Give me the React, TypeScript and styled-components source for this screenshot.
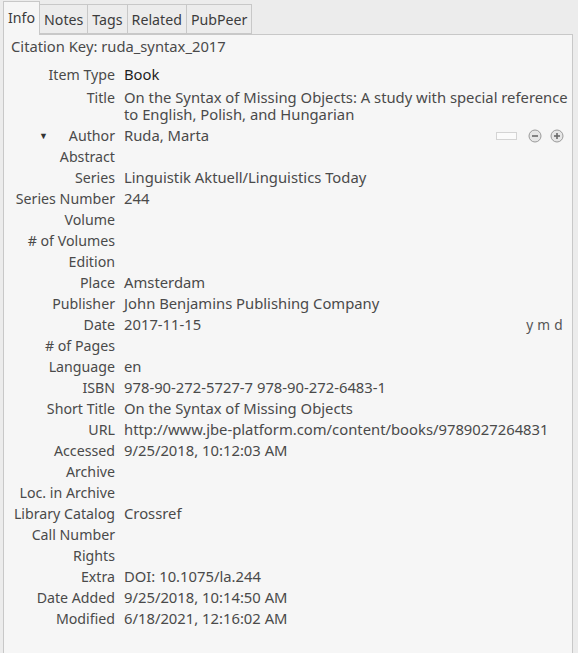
import React from "react";
import styled, { createGlobalStyle } from "styled-components";

const Global = createGlobalStyle`
  html, body { margin: 0; padding: 0; background: #ececec; }
  body { font-family: "Noto Sans", "Open Sans", sans-serif; font-size: 14.2px; color: #4a4a4a; }
`;

const Page = styled.div`
  display: flex;
  flex-direction: column;
  height: 653px;
  padding: 1px 0 0 3px;
  box-sizing: border-box;
`;

const TabStrip = styled.div`
  display: flex;
  align-items: flex-end;
  height: 33px;
  position: relative;
  z-index: 1;
`;

const Tab = styled.div<{ $active?: boolean }>`
  box-sizing: border-box;
  height: ${(p) => (p.$active ? "34px" : "30px")};
  margin-bottom: ${(p) => (p.$active ? "-1px" : "0")};
  padding: 0 4px;
  border: 1px solid #c8c8c8;
  border-left: ${(p) => (p.$active ? "1px solid #c8c8c8" : "none")};
  border-bottom: ${(p) => (p.$active ? "none" : "1px solid #c8c8c8")};
  background: ${(p) => (p.$active ? "#f6f6f6" : "#ececec")};
  display: flex;
  align-items: center;
  padding-bottom: ${(p) => (p.$active ? "3px" : "0")};
  color: #3c3c3c;
  white-space: nowrap;
`;

const Panel = styled.div`
  flex: 1;
  width: 570px;
  box-sizing: border-box;
  border: 1px solid #c8c8c8;
  border-bottom: none;
  background: #f6f6f6;
  padding: 1px 0 0 0;
`;

const CitationKey = styled.div`
  height: 20px;
  line-height: 20px;
  padding-left: 7px;
  font-size: 14.75px;
`;

const Fields = styled.div`
  display: flex;
  flex-direction: column;
  margin-top: 6px;
`;

const Row = styled.div<{ $tall?: boolean }>`
  display: grid;
  grid-template-columns: 111px 1fr;
  column-gap: 9px;
  padding: ${(p) => (p.$tall ? "4px 0" : "2px 0")};
  line-height: 17px;
`;

const Label = styled.div`
  display: flex;
  justify-content: flex-end;
  align-items: flex-start;
  text-align: right;
  white-space: nowrap;
  color: #4a4a4a;
`;

const Twisty = styled.span`
  font-size: 9px;
  color: #333;
  margin-right: auto;
  margin-left: 35px;
`;

const Value = styled.div<{ $strong?: boolean }>`
  padding-right: 3px;
  font-size: 14.8px;
  color: ${(p) => (p.$strong ? "#1e1e1e" : "#4a4a4a")};
  display: flex;
  align-items: flex-start;
  justify-content: space-between;
`;

const Controls = styled.div`
  display: flex;
  align-items: center;
  gap: 8px;
  height: 17px;
  margin-right: 5px;
`;

const MiniBox = styled.div`
  width: 19px;
  height: 6px;
  border: 1px solid #d4d4d4;
  background: #fbfbfb;
  margin-right: 3px;
`;

const DateOrder = styled.span`
  color: #555;
  font-size: 13.7px;
  letter-spacing: 0.3px;
  margin-right: 6px;
`;

const CircleIcon = ({ plus }: { plus?: boolean }) => (
  <svg width="14" height="14" viewBox="0 0 14 14">
    <circle cx="7" cy="7" r="6" fill="#e6e6e6" stroke="#9a9a9a" strokeWidth="1" />
    <rect x="4" y="6.2" width="6" height="1.6" fill="#6a6a6a" />
    {plus && <rect x="6.2" y="4" width="1.6" height="6" fill="#6a6a6a" />}
  </svg>
);

type F = { label: string; value?: string };

const afterAuthor: F[] = [
  { label: "Abstract" },
  { label: "Series", value: "Linguistik Aktuell/Linguistics Today" },
  { label: "Series Number", value: "244" },
  { label: "Volume" },
  { label: "# of Volumes" },
  { label: "Edition" },
  { label: "Place", value: "Amsterdam" },
  { label: "Publisher", value: "John Benjamins Publishing Company" },
];

const afterDate: F[] = [
  { label: "# of Pages" },
  { label: "Language", value: "en" },
  { label: "ISBN", value: "978-90-272-5727-7 978-90-272-6483-1" },
  { label: "Short Title", value: "On the Syntax of Missing Objects" },
  { label: "URL", value: "http://www.jbe-platform.com/content/books/9789027264831" },
  { label: "Accessed", value: "9/25/2018, 10:12:03 AM" },
  { label: "Archive" },
  { label: "Loc. in Archive" },
  { label: "Library Catalog", value: "Crossref" },
  { label: "Call Number" },
  { label: "Rights" },
  { label: "Extra", value: "DOI: 10.1075/la.244" },
  { label: "Date Added", value: "9/25/2018, 10:14:50 AM" },
  { label: "Modified", value: "6/18/2021, 12:16:02 AM" },
];

const Plain = ({ f }: { f: F }) => (
  <Row>
    <Label>{f.label}</Label>
    <Value>{f.value ?? ""}</Value>
  </Row>
);

export default function App() {
  return (
    <>
      <Global />
      <Page>
        <TabStrip>
          <Tab $active>Info</Tab>
          <Tab>Notes</Tab>
          <Tab>Tags</Tab>
          <Tab>Related</Tab>
          <Tab>PubPeer</Tab>
        </TabStrip>
        <Panel>
          <CitationKey>Citation Key: ruda_syntax_2017</CitationKey>
          <Fields>
            <Row $tall>
              <Label>Item Type</Label>
              <Value $strong>Book</Value>
            </Row>
            <Row>
              <Label>Title</Label>
              <Value>
                On the Syntax of Missing Objects: A study with special reference to English, Polish, and Hungarian
              </Value>
            </Row>
            <Row>
              <Label>
                <Twisty>▼</Twisty>
                Author
              </Label>
              <Value>
                <span>Ruda, Marta</span>
                <Controls>
                  <MiniBox />
                  <CircleIcon />
                  <CircleIcon plus />
                </Controls>
              </Value>
            </Row>
            {afterAuthor.map((f) => (
              <Plain key={f.label} f={f} />
            ))}
            <Row>
              <Label>Date</Label>
              <Value>
                <span>2017-11-15</span>
                <DateOrder>y m d</DateOrder>
              </Value>
            </Row>
            {afterDate.map((f) => (
              <Plain key={f.label} f={f} />
            ))}
          </Fields>
        </Panel>
      </Page>
    </>
  );
}
